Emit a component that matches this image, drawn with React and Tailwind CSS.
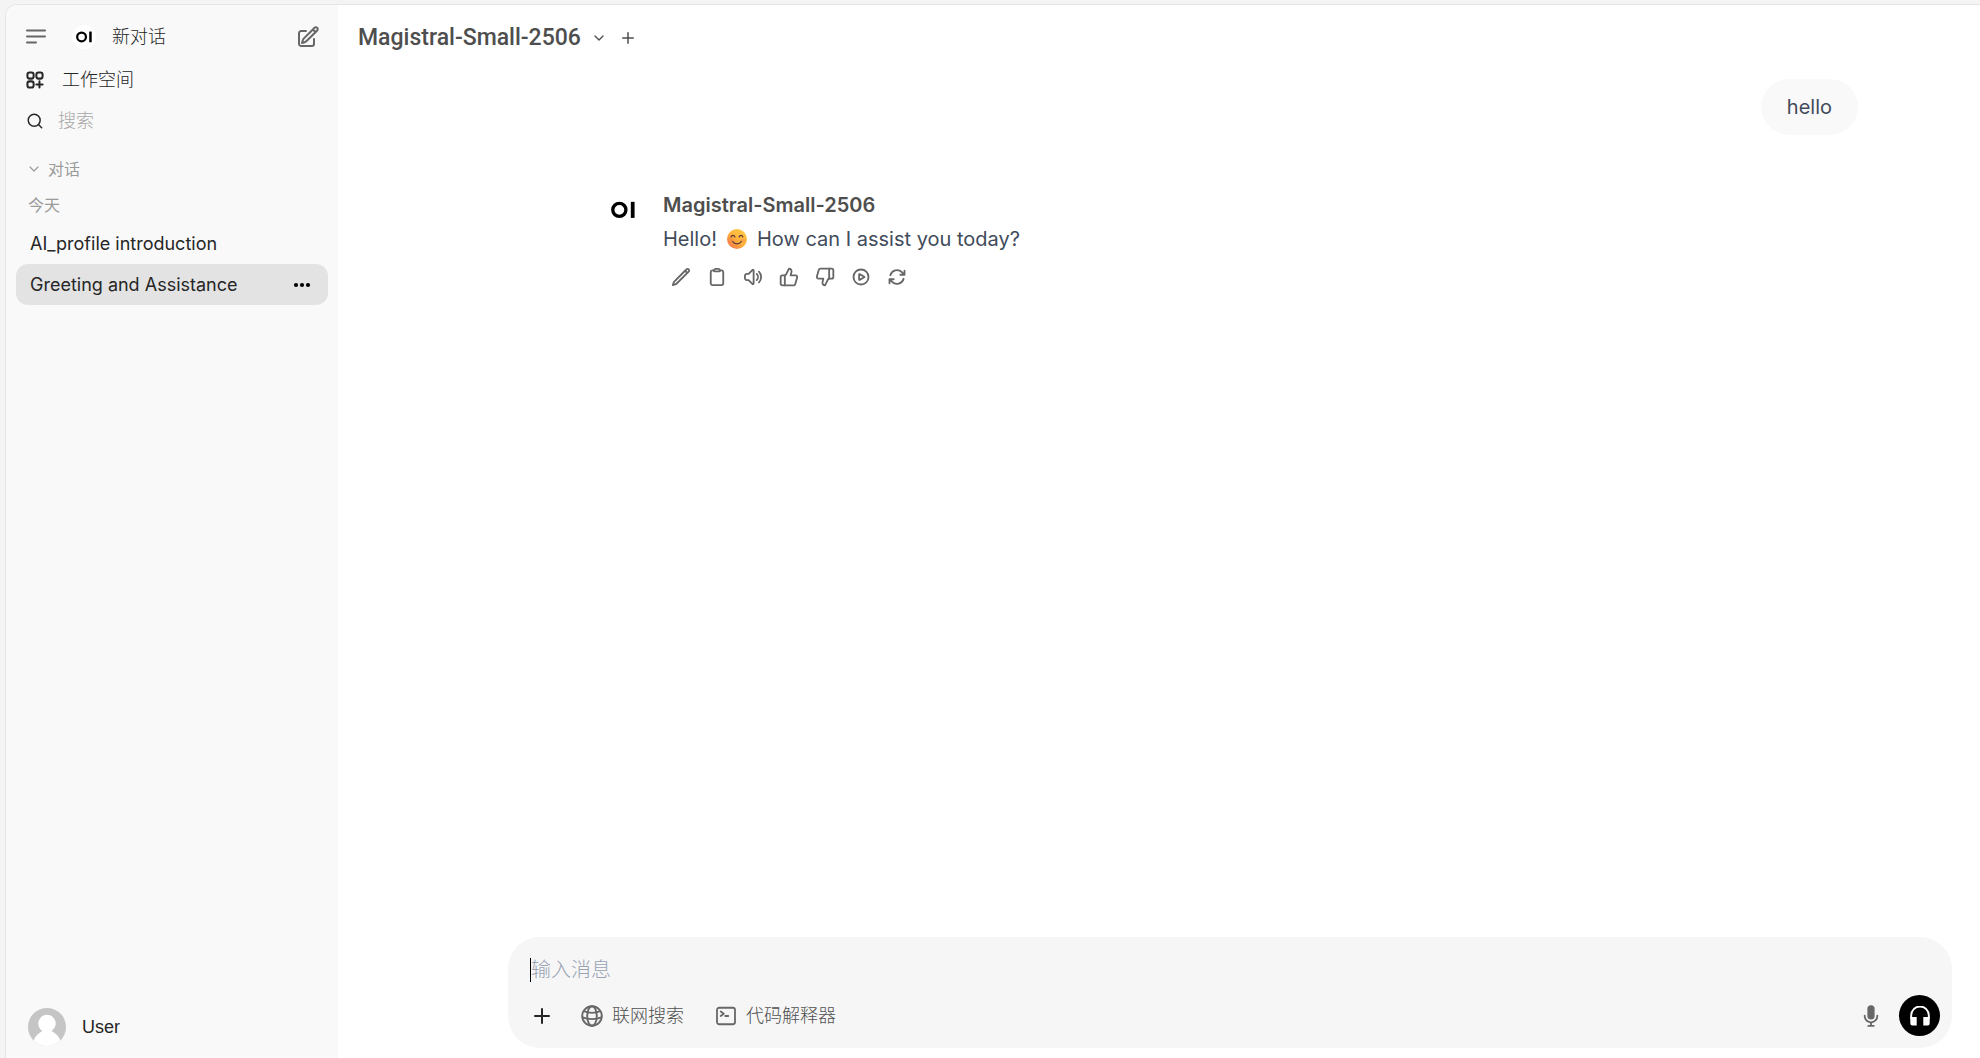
import {
  HiOutlineClipboard,
  HiOutlineSpeakerWave,
  HiOutlinePlayCircle,
  HiOutlineArrowPath,
  HiOutlineSquaresPlus,
  HiOutlinePencilSquare,
  HiOutlinePencil,
  HiOutlineCommandLine,
} from "react-icons/hi2";
import { ThumbsUp, ThumbsDown, ChevronDown, Plus, Search } from "lucide-react";

function OiMark({ className }) {
  return (
    <svg viewBox="0 0 23 17" className={className} aria-hidden="true">
      <circle cx="8" cy="8.5" r="6.3" fill="none" stroke="currentColor" strokeWidth="3.2" />
      <rect x="19" y="0.8" width="3.6" height="15.4" fill="currentColor" />
    </svg>
  );
}

function MenuLines({ className }) {
  return (
    <svg viewBox="0 0 24 24" className={className} fill="none" stroke="currentColor" strokeWidth="2" strokeLinecap="round" aria-hidden="true">
      <path d="M3 5.6h18M3 11.6h18M3 17.6h9" />
    </svg>
  );
}

function Dots({ className }) {
  return (
    <svg viewBox="0 0 24 24" className={className} fill="currentColor" aria-hidden="true">
      <circle cx="6" cy="12" r="2.1" />
      <circle cx="12" cy="12" r="2.1" />
      <circle cx="18" cy="12" r="2.1" />
    </svg>
  );
}

function Smile() {
  return (
    <svg viewBox="0 0 24 24" className="mx-2.5 size-5" role="img" aria-label="😊">
      <defs>
        <linearGradient id="face" x1="1" y1="0" x2="0.1" y2="1">
          <stop offset="0" stopColor="#ffd04a" />
          <stop offset="0.55" stopColor="#fdb13c" />
          <stop offset="1" stopColor="#f3704a" />
        </linearGradient>
      </defs>
      <circle cx="12" cy="12" r="12" fill="url(#face)" />
      <ellipse cx="4.6" cy="13.6" rx="3" ry="2.6" fill="#f8794f" opacity="0.3" />
      <ellipse cx="19.4" cy="13.6" rx="3" ry="2.6" fill="#f8794f" opacity="0.3" />
      <path d="M5 9.6c.7-2.6 3.7-2.6 4.4 0M14.6 9.6c.7-2.6 3.7-2.6 4.4 0M6.8 15c2.2 3.6 8.2 3.6 10.4 0" fill="none" stroke="#5b3a3a" strokeWidth="1.5" strokeLinecap="round" />
    </svg>
  );
}

function Globe({ className }) {
  return (
    <svg viewBox="0 0 24 24" className={className} fill="none" stroke="currentColor" strokeWidth="1.9" aria-hidden="true">
      <circle cx="12" cy="12" r="9.8" />
      <ellipse cx="12" cy="12" rx="4.8" ry="9.8" />
      <path d="M3.8 7.2c4.8 2 11.6 2 16.4 0M2.2 13.2c5.6 2.6 14 2.6 19.6 0" />
    </svg>
  );
}

function Mic({ className }) {
  return (
    <svg viewBox="0 0 20 20" className={className} fill="currentColor" aria-hidden="true">
      <path d="M7 4a3 3 0 0 1 6 0v6a3 3 0 1 1-6 0V4Z" />
      <path d="M5.5 9.643a.75.75 0 0 0-1.5 0V10c0 3.06 2.29 5.585 5.25 5.954V17.5h-1.5a.75.75 0 0 0 0 1.5h4.5a.75.75 0 0 0 0-1.5h-1.5v-1.546A6.001 6.001 0 0 0 16 10v-.357a.75.75 0 0 0-1.5 0V10a4.5 4.5 0 0 1-9 0v-.357Z" />
    </svg>
  );
}

function Headphones({ className }) {
  return (
    <svg viewBox="0 0 20 20" className={className} aria-hidden="true">
      <path d="M1.2 13V9.3a8.8 8.8 0 0 1 17.6 0V13" fill="none" stroke="currentColor" strokeWidth="1.9" />
      <path d="M.3 11h6.400v8.6H2.3a2 2 0 0 1-2-2ZM13.3 11h6.400v6.600a2 2 0 0 1-2 2h-4.400Z" fill="currentColor" />
    </svg>
  );
}

function Avatar({ className }) {
  return (
    <svg viewBox="0 0 38 38" className={className} aria-hidden="true">
      <circle cx="19" cy="19" r="19" fill="#c5c5c5" />
      <path d="M5.5 32.4C7.5 28 10.5 25 14.5 23a8.7 8.7 0 1 1 9 0c4 2 7 5 9 9.400A19 19 0 0 1 5.500 32.400Z" fill="#fff" />
    </svg>
  );
}

const actions = [
  ["编辑", HiOutlinePencil],
  ["复制", HiOutlineClipboard],
  ["朗读", HiOutlineSpeakerWave],
  ["赞", ThumbsUp],
  ["踩", ThumbsDown],
  ["继续", HiOutlinePlayCircle],
  ["重新生成", HiOutlineArrowPath],
];

function Sidebar() {
  return (
    <aside className="flex w-83 shrink-0 flex-col bg-[#f9f9f9] px-2.5 pt-2.5 text-lg text-[#262626]">
      <div className="flex h-11 items-center pr-2 pl-2">
        <button aria-label="菜单" className="text-[#676767]"><MenuLines className="size-6" /></button>
        <a href="#new" className="ml-6 flex items-center">
          <span className="flex size-6 items-center justify-center rounded-full bg-white text-black">
            <OiMark className="w-4" />
          </span>
          <span className="ml-4 font-light">新对话</span>
        </a>
        <button aria-label="新建" className="ml-auto text-[#676767]"><HiOutlinePencilSquare strokeWidth="2" className="size-6" /></button>
      </div>
      <a href="#workspace" className="flex h-[42px] items-center pl-2">
        <HiOutlineSquaresPlus strokeWidth="2.2" className="size-[22px]" />
        <span className="ml-4 font-light">工作空间</span>
      </a>
      <label className="flex h-10 items-center pl-2.5">
        <Search strokeWidth={2} className="size-5" />
        <input type="text" aria-label="搜索" placeholder="搜索" className="ml-3.5 w-full bg-transparent font-light outline-none placeholder:text-[#a8a8a8]" />
      </label>
      <button className="mt-2 flex h-10 items-center gap-1.5 pl-2.5 text-base text-[#9b9b9b]">
        <ChevronDown strokeWidth={1.8} className="size-4" />
        对话
      </button>
      <h2 className="h-[34px] pt-1 pl-3 text-base leading-6 text-[#9b9b9b]">今天</h2>
      <nav>
        <a href="#profile" className="flex h-[41px] items-center px-3.5">AI_profile introduction</a>
        <div className="flex h-[41px] items-center justify-between rounded-xl bg-[#e3e3e3] px-3.5">
          <a href="#greeting">Greeting and Assistance</a>
          <button aria-label="更多" className="text-black"><Dots className="size-6" /></button>
        </div>
      </nav>
      <button className="mt-auto mb-3 flex items-center gap-4 pl-3 font-['Liberation_Sans',sans-serif]">
        <Avatar className="size-[38px]" />
        User
      </button>
    </aside>
  );
}

export default function App() {
  return (
    <div className="flex h-screen bg-[#f4f4f4] pt-1 pl-[5px] font-['Inter','Noto_Sans_CJK_SC',sans-serif]">
      <div className="flex min-w-0 flex-1 overflow-hidden rounded-tl-xl border-t border-l border-[#e5e5e5] bg-white">
        <Sidebar />
        <main className="flex min-w-0 flex-1 flex-col text-xl">
          <header className="flex h-[66px] items-center pl-5 text-[#4e4e4e]">
            <button className="flex items-center gap-2.5 font-['Roboto',sans-serif] text-[23px] font-medium">
              Magistral-Small-2506
              <ChevronDown strokeWidth={2} className="size-4" />
            </button>
            <button aria-label="添加模型" className="ml-3"><Plus strokeWidth={2} className="size-[18px]" /></button>
          </header>
          <section className="flex-1 pr-[122px] pl-[273px]">
            <div className="flex justify-end pt-2">
              <p className="rounded-full bg-[#f9f9f9] px-[26px] py-3.5 text-[#414b5a]">hello</p>
            </div>
            <article className="mt-14 flex gap-7">
              <OiMark className="mt-2.5 w-6 self-start text-black" />
              <div>
                <h3 className="font-semibold text-[#4e4e4e]">Magistral-Small-2506</h3>
                <p className="mt-1.5 flex items-center text-[#414b5a]">Hello!<Smile />How can I assist you today?</p>
                <div className="mt-3.5 flex gap-4 pl-2 text-[#676767]">
                  {actions.map(([label, Icon]) => (
                    <button key={label} aria-label={label}><Icon strokeWidth="2.2" className="size-5" /></button>
                  ))}
                </div>
              </div>
            </article>
          </section>
          <form className="mr-7 mb-2.5 ml-[170px] rounded-[32px] bg-[#f6f6f6] pt-4 pr-3 pb-3 pl-[22px]">
            <div className="flex h-[34px] items-center">
              <span className="h-6 w-px bg-black" />
              <input type="text" aria-label="输入消息" placeholder="输入消息" className="w-full bg-transparent font-light outline-none placeholder:text-[#98a2b3]" />
            </div>
            <div className="mt-2 flex items-center text-lg text-[#676767]">
              <button type="button" aria-label="添加" className="text-[#262626]"><Plus strokeWidth={2} className="size-6" /></button>
              <button type="button" className="ml-[26px] flex items-center gap-2 font-light text-[#505050]"><Globe className="size-6 text-[#676767]" />联网搜索</button>
              <button type="button" className="ml-[30px] flex items-center gap-2 font-light text-[#505050]"><HiOutlineCommandLine strokeWidth="1.8" className="size-6 text-[#676767]" />代码解释器</button>
              <button type="button" aria-label="语音输入" className="ml-auto"><Mic className="size-6" /></button>
              <button type="button" aria-label="语音通话" className="ml-4 flex size-[41px] items-center justify-center rounded-full bg-black text-white"><Headphones className="size-5" /></button>
            </div>
          </form>
        </main>
      </div>
    </div>
  );
}
